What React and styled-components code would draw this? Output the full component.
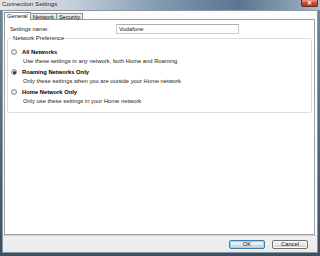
import React from "react";
import styled, { createGlobalStyle } from "styled-components";

const Global = createGlobalStyle`
  html, body { margin: 0; padding: 0; background: #3d4b59; }
  #root { width: 320px; height: 256px; overflow: hidden; }
  * { box-sizing: border-box; }
`;

const Window = styled.div`
  width: 320px;
  height: 256px;
  display: flex;
  flex-direction: column;
  background: linear-gradient(180deg, #6f879c 0%, #3f4f5e 100%);
  font-family: "Liberation Sans", Arial, sans-serif;
  font-size: 5.8px;
  color: #1a1a1a;
`;

const TitleBar = styled.div`
  height: 10px;
  display: flex;
  align-items: flex-start;
  justify-content: space-between;
  padding: 0 2px 0 2px;
  background: linear-gradient(90deg, #e4e4e8 0%, #c7d0da 22%, #8ea3b8 45%, #6f8aa3 60%, #5a7690 75%, #8aa0b5 92%, #aebdcb 100%);
`;

const Title = styled.span`
  font-size: 6.2px;
  line-height: 8px;
  color: #111;
  text-shadow: 0 0 2px #fff;
`;

const CloseButton = styled.div`
  width: 17px;
  height: 7px;
  border-radius: 0 0 2px 2px;
  background: linear-gradient(180deg, #e89a86 0%, #c8452c 55%, #b6361f 100%);
  border: 1px solid #6b2a20;
  border-top: none;
  display: flex;
  align-items: center;
  justify-content: center;
  color: #fff;
  font-size: 6px;
  line-height: 6px;
  font-weight: bold;
`;

const Client = styled.div`
  flex: 1;
  margin: 0 2px 3px 2px;
  display: flex;
  flex-direction: column;
  background: #f4f4f4;
  border: 1px solid #8a98a6;
`;

const Body = styled.div`
  flex: 1;
  display: flex;
  flex-direction: column;
  background: #fcfcfc;
  padding: 1px 2px 0 0;
`;

const TabStrip = styled.div`
  display: flex;
  align-items: flex-end;
  height: 8px;
  padding-left: 1px;
`;

const Tab = styled.div`
  height: ${(p) => (p.$active ? "8px" : "7px")};
  padding: 0 2px;
  line-height: 7px;
  border: 1px solid #8e8f8f;
  border-bottom: ${(p) => (p.$active ? "none" : "1px solid #8e8f8f")};
  margin-right: -1px;
  background: ${(p) =>
    p.$active ? "#ffffff" : "linear-gradient(180deg, #f3f3f3 0%, #e3e3e3 50%, #d8d8d8 100%)"};
  position: relative;
  z-index: ${(p) => (p.$active ? 2 : 1)};
  color: #111;
`;

const Panel = styled.div`
  flex: 1;
  margin-top: -1px;
  margin-left: 1px;
  background: #ffffff;
  border: 1px solid #a0a0a0;
  padding: 3px 2px 0 2px;
  display: flex;
  flex-direction: column;
`;

const NameRow = styled.div`
  display: flex;
  align-items: center;
  height: 11px;
  padding-left: 3px;
`;

const Label = styled.span`
  width: 106px;
`;

const Input = styled.div`
  width: 123px;
  height: 10px;
  border: 1px solid #c8ccd0;
  border-top-color: #abadb3;
  padding-left: 2px;
  line-height: 8px;
  background: #fff;
`;

const Group = styled.fieldset`
  margin: 1px 0 0 0;
  padding: 7px 0 0 3px;
  border: 1px solid #d5dfe5;
  border-radius: 2px;
  height: 78px;
  display: flex;
  flex-direction: column;
  gap: 3px;
`;

const Legend = styled.legend`
  padding: 0 1px;
  margin-left: 1px;
  line-height: 6px;
  color: #1a1a1a;
`;

const Option = styled.div`
  display: grid;
  grid-template-columns: 11px 1fr;
  grid-template-rows: 8px 9px;
  align-items: center;
`;

const Radio = styled.span`
  width: 6px;
  height: 6px;
  border-radius: 50%;
  border: 1px solid #8a8a8a;
  background: radial-gradient(circle, #f4f4f4 0%, #dcdcdc 100%);
  display: flex;
  align-items: center;
  justify-content: center;
  &::after {
    content: "";
    display: ${(p) => (p.$checked ? "block" : "none")};
    width: 3px;
    height: 3px;
    border-radius: 50%;
    background: #2a2a2a;
  }
`;

const OptionTitle = styled.span`
  font-weight: bold;
  color: #000;
`;

const OptionDesc = styled.span`
  grid-column: 2;
  padding-left: 1px;
  color: #222;
`;

const ButtonBar = styled.div`
  height: 17px;
  border-top: 1px solid #d0d0d0;
  background: linear-gradient(180deg, #f0f0f0 0%, #ececec 100%);
  display: flex;
  align-items: center;
  justify-content: flex-end;
  gap: 7px;
  padding-right: 9px;
`;

const Button = styled.div`
  width: 36px;
  height: 9px;
  border: 1px solid ${(p) => (p.$default ? "#3c7fb1" : "#707070")};
  border-radius: 2px;
  background: linear-gradient(180deg, #f2f2f2 0%, #ebebeb 50%, #dddddd 51%, #cfcfcf 100%);
  box-shadow: ${(p) => (p.$default ? "inset 0 0 0 1px #9bd7f3" : "inset 0 0 0 1px #fbfbfb")};
  display: flex;
  align-items: center;
  justify-content: center;
  color: #111;
  font-size: 5.8px;
`;

const options = [
  { title: "All Networks", desc: "Use these settings in any network, both Home and Roaming", checked: false },
  { title: "Roaming Networks Only", desc: "Only these settings when you are outside your Home network", checked: true },
  { title: "Home Network Only", desc: "Only use these settings in your Home network", checked: false },
];

export default function App() {
  return (
    <>
      <Global />
      <Window>
        <TitleBar>
          <Title>Connection Settings</Title>
          <CloseButton>✕</CloseButton>
        </TitleBar>
        <Client>
          <Body>
            <TabStrip>
              <Tab $active>General</Tab>
              <Tab>Network</Tab>
              <Tab>Security</Tab>
            </TabStrip>
            <Panel>
              <NameRow>
                <Label>Settings name:</Label>
                <Input>Vodafone</Input>
              </NameRow>
              <Group>
                <Legend>Network Preference</Legend>
                {options.map((o) => (
                  <Option key={o.title}>
                    <Radio $checked={o.checked} />
                    <OptionTitle>{o.title}</OptionTitle>
                    <OptionDesc>{o.desc}</OptionDesc>
                  </Option>
                ))}
              </Group>
            </Panel>
          </Body>
          <ButtonBar>
            <Button $default>OK</Button>
            <Button>Cancel</Button>
          </ButtonBar>
        </Client>
      </Window>
    </>
  );
}
